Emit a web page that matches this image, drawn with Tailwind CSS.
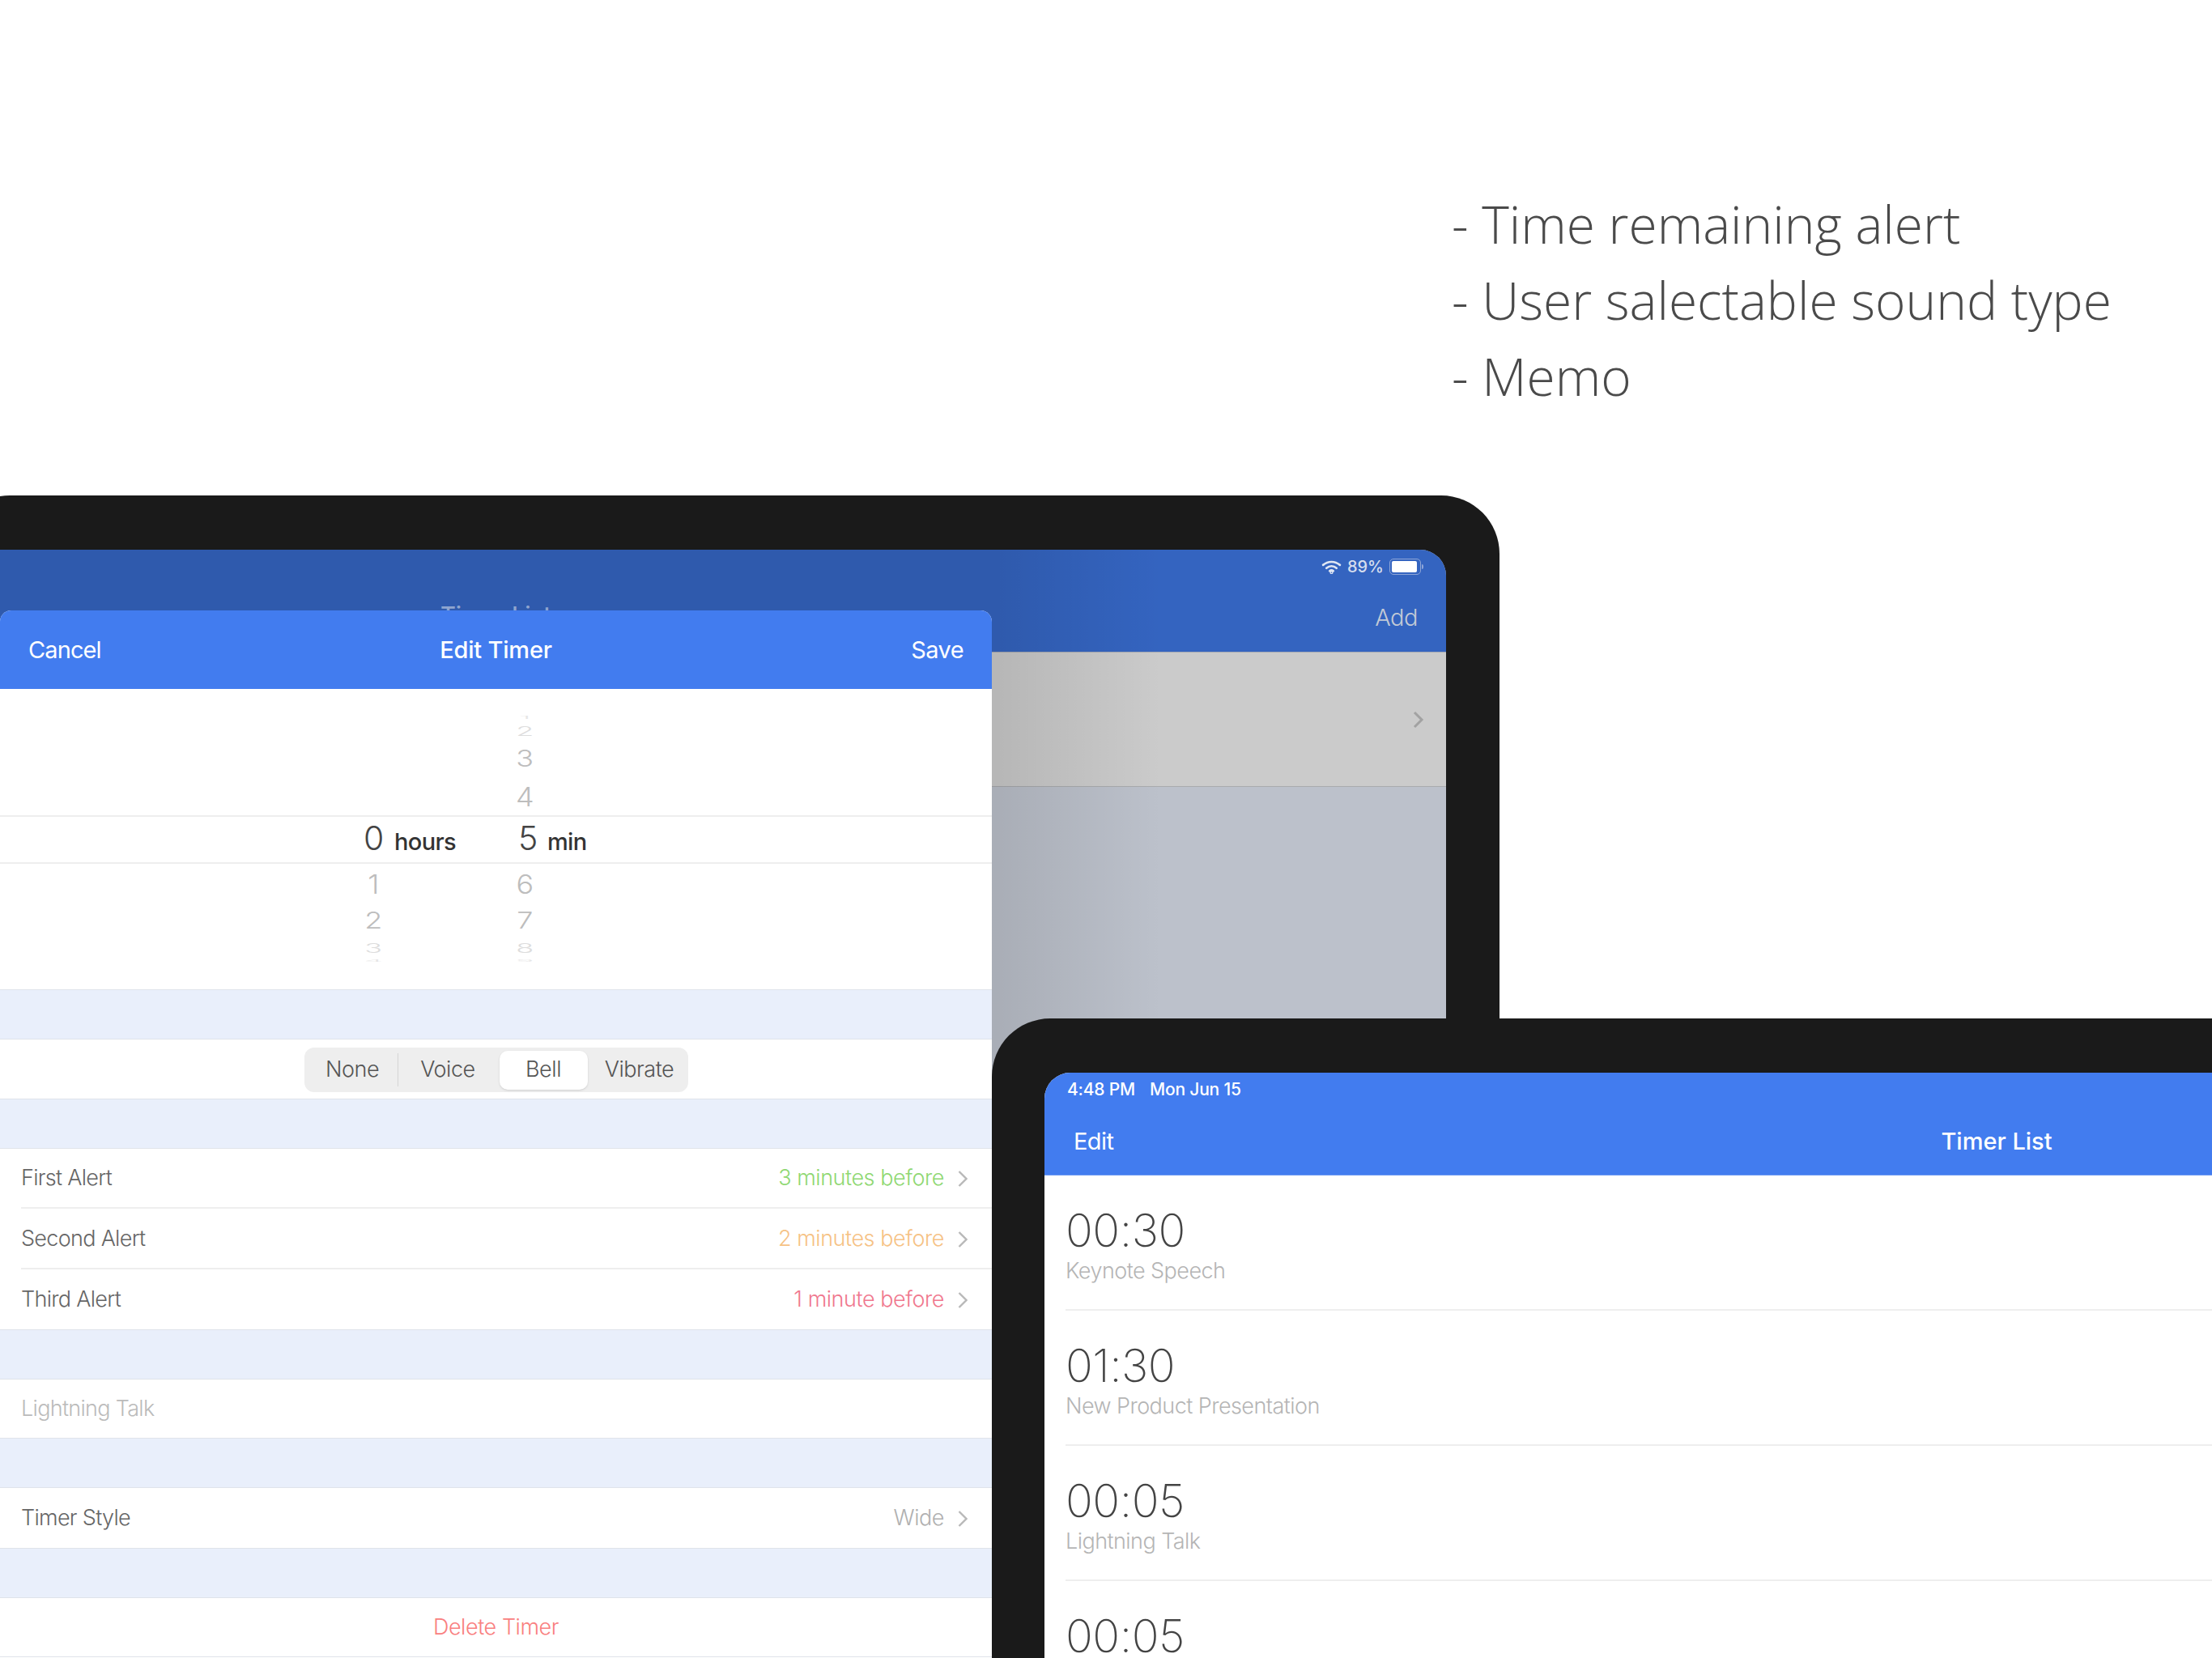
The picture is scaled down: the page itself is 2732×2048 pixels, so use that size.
<!DOCTYPE html>
<html lang="en">
<head>
  <meta charset="UTF-8" />
  <title>Timer</title>
  <script src="https://cdn.jsdelivr.net/npm/@tailwindcss/browser@4"></script>
</head>
<body class="bg-white">
  <div class="relative w-[2732px] h-[2048px] overflow-hidden bg-white font-['Inter',sans-serif]">

    <!-- Feature list -->
    <ul class="absolute left-[1793px] top-[230px] font-['Open_Sans',sans-serif] font-light text-[64px] leading-[94px] text-[#4a4a4a]">
      <li>- Time remaining alert</li>
      <li>- User salectable sound type</li>
      <li>- Memo</li>
    </ul>

    <!-- Back tablet -->
    <div class="absolute left-[-60px] top-[612px] w-[1912px] h-[1500px] rounded-[72px] bg-[#1a1a1a] pt-[67px] pr-[66px]">
      <div class="relative flex flex-col h-full rounded-tr-[32px] overflow-hidden bg-[#bcc1cb]">
        <div class="h-[127px] shrink-0 bg-[#3464c0] border-b border-[#a5a9b3]">
          <div class="flex justify-end items-center gap-[7px] h-[42px] pr-[28px] text-[20px] font-medium text-[#d6deee]">
            <svg width="25" height="17" viewBox="0 0 24 16" fill="none" stroke="#dfe6f3" stroke-linecap="round" stroke-width="2.6">
              <path d="M2 5.5C8 .5 16 .5 22 5.5" />
              <path d="M6 9.2C9.6 6.2 14.4 6.2 18 9.2" />
              <path d="M9.8 12.6C11 11.7 13 11.7 14.2 12.6" />
              <circle cx="12" cy="14.4" r=".6" />
            </svg>
            <span>89%</span>
            <span class="flex items-center gap-[1px]">
              <span class="block w-[39px] h-[20px] rounded-[5px] border border-[#8ea6d8] p-[2px]"><span class="block w-[31px] h-full rounded-[2px] bg-white"></span></span>
              <span class="block w-[2px] h-[6px] rounded-r bg-[#8ea6d8]"></span>
            </span>
          </div>
          <div class="flex justify-end items-center h-[84px] pr-[35px] text-[29px] tracking-[-0.5px] text-[#c3cad6] font-light">
            <span>Add</span>
          </div>
        </div>
        <div class="flex justify-end items-center h-[166px] shrink-0 pr-[27px] bg-[#cbcbcb] border-b border-[#a9abae]">
          <svg width="14" height="22" viewBox="0 0 14 22" fill="none" stroke="#a2a2a2" stroke-width="3"><path d="M2 2l9 9-9 9" /></svg>
        </div>
        <!-- Shade cast by the sheet -->
        <div class="absolute inset-0 bg-gradient-to-r from-black/10 from-[70%] to-transparent to-[81%]"></div>
      </div>
    </div>

    <!-- Ghost title behind the sheet -->
    <div class="absolute left-0 top-[738px] w-[1225px] text-center text-[29px] font-medium text-[#8fa5cf]">Timer List</div>

    <!-- Edit Timer sheet -->
    <div class="absolute left-0 top-[754px] w-[1225px] h-[1294px] flex flex-col rounded-t-[14px] overflow-hidden bg-white font-light text-[27px] tracking-[-0.45px] text-[#666666]">
      <div class="grid grid-cols-[1fr_auto_1fr] items-center h-[97px] shrink-0 px-[35px] bg-[#427cef] text-white text-[29px]">
        <span class="font-normal tracking-[-0.9px]">Cancel</span>
        <span class="font-medium tracking-[-0.2px]">Edit Timer</span>
        <span class="justify-self-end font-normal tracking-[-0.6px]">Save</span>
      </div>

      <!-- Time picker -->
      <div class="h-[371px] shrink-0 pt-[29px] text-[36px] font-light text-[#bdbdbd]">
        <div class="flex h-[12px] pl-[431px] overflow-hidden items-center"><span class="w-[60px]"></span><span class="ml-[127px] w-[60px] text-center text-[#e6e6e6] scale-y-[.15]">1</span></div>
        <div class="flex h-[22px] pl-[431px] items-center"><span class="w-[60px]"></span><span class="ml-[127px] w-[60px] text-center text-[#dddddd] scale-y-[.45]">2</span></div>
        <div class="flex h-[46px] pl-[431px] items-center"><span class="w-[60px]"></span><span class="ml-[127px] w-[60px] text-center scale-y-[.8]">3</span></div>
        <div class="flex h-[47px] pl-[431px] items-center"><span class="w-[60px]"></span><span class="ml-[127px] w-[60px] text-center scale-y-[.92]">4</span></div>
        <div class="flex items-center h-[60px] pl-[449px] pb-[2px] border-y-2 border-[#eeeeee] text-[#444444]">
          <div class="flex items-baseline gap-[13px] w-[191px]"><span class="text-[41px]">0</span><span class="text-[29px] font-medium text-[#333333] tracking-[-0.6px]">hours</span></div>
          <div class="flex items-baseline gap-[12px]"><span class="text-[41px]">5</span><span class="text-[29px] font-medium text-[#333333] tracking-[-0.6px]">min</span></div>
        </div>
        <div class="flex h-[49px] pl-[431px] items-center"><span class="w-[60px] text-center scale-y-[.92]">1</span><span class="ml-[127px] w-[60px] text-center scale-y-[.92]">6</span></div>
        <div class="flex h-[41px] pl-[431px] items-center"><span class="w-[60px] text-center scale-y-[.8]">2</span><span class="ml-[127px] w-[60px] text-center scale-y-[.8]">7</span></div>
        <div class="flex h-[27px] pl-[431px] items-center text-[#dddddd]"><span class="w-[60px] text-center scale-y-[.45]">3</span><span class="ml-[127px] w-[60px] text-center scale-y-[.45]">8</span></div>
        <div class="flex h-[6px] pl-[431px] items-center overflow-hidden text-[#e6e6e6]"><span class="w-[60px] text-center scale-y-[.1]">4</span><span class="ml-[127px] w-[60px] text-center scale-y-[.1]">9</span></div>
      </div>

      <!-- Sound type -->
      <div class="h-[62px] shrink-0 bg-[#e9effb] border-y border-[#dfe3ea]"></div>
      <div class="flex items-center justify-center h-[73px] shrink-0 pt-[2px]">
        <div class="flex items-center w-[474px] h-[55px] rounded-[12px] bg-[#eeeeee] p-[4px] text-[27px] text-[#555555]">
          <span class="w-[112px] text-center border-r border-[#d5d5d5]">None</span>
          <span class="w-[125px] pr-[2px] text-center">Voice</span>
          <span class="flex items-center justify-center w-[109px] h-[48px] rounded-[10px] bg-white shadow-sm">Bell</span>
          <span class="flex-1 pl-[8px] text-center">Vibrate</span>
        </div>
      </div>

      <!-- Alerts -->
      <div class="h-[62px] shrink-0 bg-[#e9effb] border-y border-[#dfe3ea]"></div>
      <div class="flex items-center justify-between h-[74px] shrink-0 ml-[26px] pt-[1px] pr-[30px] border-b-2 border-[#eeeeee]">
        <span class="tracking-[-0.7px]">First Alert</span>
        <span class="flex items-center gap-[17px] text-[#8fd873]">3 minutes before
          <svg width="12" height="22" viewBox="0 0 12 22" fill="none" stroke="#b8b8b8" stroke-width="2.4"><path d="M1.5 2l9 9-9 9" /></svg>
        </span>
      </div>
      <div class="flex items-center justify-between h-[75px] shrink-0 ml-[26px] pt-[2px] pr-[30px] border-b-2 border-[#eeeeee]">
        <span class="tracking-[-0.7px]">Second Alert</span>
        <span class="flex items-center gap-[17px] text-[#f6c285]">2 minutes before
          <svg width="12" height="22" viewBox="0 0 12 22" fill="none" stroke="#b8b8b8" stroke-width="2.4"><path d="M1.5 2l9 9-9 9" /></svg>
        </span>
      </div>
      <div class="flex items-center justify-between h-[74px] shrink-0 ml-[26px] pt-[1px] pr-[30px]">
        <span class="tracking-[-0.7px]">Third Alert</span>
        <span class="flex items-center gap-[17px] text-[#f0788e]">1 minute before
          <svg width="12" height="22" viewBox="0 0 12 22" fill="none" stroke="#b8b8b8" stroke-width="2.4"><path d="M1.5 2l9 9-9 9" /></svg>
        </span>
      </div>

      <!-- Memo -->
      <div class="h-[62px] shrink-0 bg-[#e9effb] border-y border-[#dfe3ea]"></div>
      <div class="flex items-center h-[72px] shrink-0 pl-[26px] tracking-[-0.7px] text-[#bbbbbb]">Lightning Talk</div>

      <!-- Style -->
      <div class="h-[62px] shrink-0 bg-[#e9effb] border-y border-[#dfe3ea]"></div>
      <div class="flex items-center justify-between h-[74px] shrink-0 pl-[26px] pt-[1px] pr-[30px]">
        <span class="tracking-[-0.7px]">Timer Style</span>
        <span class="flex items-center gap-[17px] text-[#b0b0b0]">Wide
          <svg width="12" height="22" viewBox="0 0 12 22" fill="none" stroke="#b8b8b8" stroke-width="2.4"><path d="M1.5 2l9 9-9 9" /></svg>
        </span>
      </div>

      <!-- Delete -->
      <div class="h-[62px] shrink-0 bg-[#e9effb] border-y border-[#dfe3ea]"></div>
      <div class="flex items-center justify-center h-[73px] shrink-0 text-[#f98080] border-b border-[#dfe3ea]">Delete Timer</div>
    </div>

    <!-- Front tablet -->
    <div class="absolute left-[1225px] top-[1258px] w-[2500px] h-[900px] rounded-tl-[72px] bg-[#1a1a1a] pl-[65px] pt-[67px]">
      <div class="w-[2316px] h-full rounded-tl-[32px] overflow-hidden bg-white">
        <div class="h-[127px] bg-[#427cef] border-b border-[#6f9bf3] text-white">
          <div class="flex items-center gap-[18px] h-[41px] pl-[28px] text-[21px] font-medium tracking-[-0.2px]">
            <span>4:48 PM</span>
            <span>Mon Jun 15</span>
          </div>
          <div class="grid grid-cols-[1fr_auto_1fr] items-center h-[86px] pl-[36px] pt-[2px] text-[29px]">
            <span class="font-normal tracking-[-0.6px]">Edit</span>
            <span class="font-medium">Timer List</span>
            <span></span>
          </div>
        </div>
        <div class="pl-[26px] font-light">
          <div class="h-[167px] pt-[37px] border-b-2 border-[#eeeeee]">
            <div class="text-[56px] leading-[62px] font-extralight tracking-[-0.5px] text-[#444444]">00:30</div>
            <div class="text-[27px] leading-[37px] tracking-[-0.55px] text-[#b5b5b5]">Keynote Speech</div>
          </div>
          <div class="h-[167px] pt-[37px] border-b-2 border-[#eeeeee]">
            <div class="text-[56px] leading-[62px] font-extralight tracking-[-0.5px] text-[#444444]">01:30</div>
            <div class="text-[27px] leading-[37px] tracking-[-0.55px] text-[#b5b5b5]">New Product Presentation</div>
          </div>
          <div class="h-[167px] pt-[37px] border-b-2 border-[#eeeeee]">
            <div class="text-[56px] leading-[62px] font-extralight tracking-[-0.5px] text-[#444444]">00:05</div>
            <div class="text-[27px] leading-[37px] tracking-[-0.55px] text-[#b5b5b5]">Lightning Talk</div>
          </div>
          <div class="h-[167px] pt-[37px]">
            <div class="text-[56px] leading-[62px] font-extralight tracking-[-0.5px] text-[#444444]">00:05</div>
          </div>
        </div>
      </div>
    </div>
  </div>
</body>
</html>
